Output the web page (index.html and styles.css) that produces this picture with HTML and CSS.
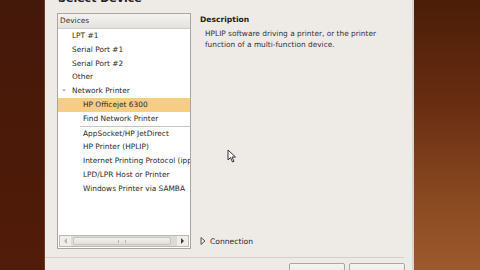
FILE: index.html
```html
<!doctype html>
<html lang="en">
  <head>
    <meta charset="UTF-8" />
    <title>Select Device</title>
    <link rel="stylesheet" href="styles.css">
  </head>
  <body>
    <div class="desk-left"></div>
    <main class="dialog">
      <h1 class="dialog-title">Select Device</h1>
      <div class="dialog-body">
        <section class="tree">
          <div class="tree-header">Devices</div>
          <ul class="tree-list">
            <li class="tree-row">LPT #1</li>
            <li class="tree-row">Serial Port #1</li>
            <li class="tree-row">Serial Port #2</li>
            <li class="tree-row">Other</li>
            <li class="tree-row tree-parent"><span class="expander">&#8964;</span>Network Printer</li>
            <li class="tree-row child selected">HP Officejet 6300</li>
            <li class="tree-row child">Find Network Printer</li>
            <li class="tree-sep"></li>
            <li class="tree-row child">AppSocket/HP JetDirect</li>
            <li class="tree-row child">HP Printer (HPLIP)</li>
            <li class="tree-row child">Internet Printing Protocol (ipp)</li>
            <li class="tree-row child">LPD/LPR Host or Printer</li>
            <li class="tree-row child">Windows Printer via SAMBA</li>
          </ul>
          <div class="hscroll">
            <span class="scroll-btn">
              <svg width="5" height="6" viewBox="0 0 5 6"><path d="M4 0L1 3L4 6Z" fill="#b8b5b0"/></svg>
            </span>
            <span class="scroll-trough"><span class="scroll-thumb"><span class="grip"></span></span></span>
            <span class="scroll-btn">
              <svg width="5" height="6" viewBox="0 0 5 6"><path d="M1 0L4 3L1 6Z" fill="#3c3c3c"/></svg>
            </span>
          </div>
        </section>
        <section class="info">
          <h2 class="info-title">Description</h2>
          <p class="info-text">HPLIP software driving a printer, or the printer function of a multi-function device.</p>
          <div class="info-spacer"></div>
          <div class="connection">
            <svg width="6" height="8" viewBox="0 0 6 8"><path d="M1 0.5L5 4L1 7.5Z" fill="none" stroke="#555" stroke-width="1"/></svg>
            <span>Connection</span>
          </div>
        </section>
      </div>
      <div class="dialog-sep"></div>
      <div class="dialog-buttons">
        <button class="btn">Cancel</button>
        <button class="btn">Forward</button>
      </div>
      <svg class="cursor" width="10" height="14" viewBox="0 0 10 14">
        <path d="M1 1L1 11L3.5 8.5L5.5 13L7 12.3L5 8L8.5 8Z" fill="#fff" stroke="#333" stroke-width="1"/>
      </svg>
    </main>
    <div class="desk-right"></div>
  </body>
</html>
```

FILE: styles.css
```css
* {
  margin: 0;
  padding: 0;
  box-sizing: border-box;
}

html,
body {
  width: 480px;
  height: 270px;
  overflow: hidden;
}

body {
  display: flex;
  font-family: "DejaVu Sans", sans-serif;
  font-size: 7.4px;
  color: #2a2a2a;
  background: #4a1c08;
}

.desk-left {
  width: 45px;
  background: linear-gradient(180deg, #44180a 0%, #4c1a08 60%, #521c0a 100%);
  border-right: 1px solid #6a3a22;
}

.desk-right {
  flex: 1;
  background: linear-gradient(180deg, #4a1d08 0%, #6a2e12 40%, #8a4a22 75%, #9c5a2c 100%);
  border-left: 2px solid #d8d4ce;
}

.dialog {
  position: relative;
  width: 367px;
  background: #eeebe7;
  display: flex;
  flex-direction: column;
  padding: 0 0 0 12px;
}

.dialog-title {
  flex-shrink: 0;
  font-size: 11px;
  font-weight: bold;
  line-height: 12px;
  margin-top: -7px;
  margin-left: 1px;
  color: #222;
}

.dialog-body {
  flex-shrink: 0;
  display: flex;
  gap: 9px;
  margin-top: 8px;
  height: 236px;
}

.tree {
  width: 134px;
  border: 1px solid #a9a6a1;
  background: #fff;
  display: flex;
  flex-direction: column;
}

.tree-header {
  height: 15px;
  line-height: 14px;
  padding-left: 2px;
  background: linear-gradient(180deg, #f4f3f1 0%, #e4e2de 100%);
  border-bottom: 1px solid #cfccc7;
  color: #333;
}

.tree-list {
  list-style: none;
  flex: 1;
  padding-top: 0;
}

.tree-row {
  height: 13.8px;
  line-height: 13.8px;
  padding-left: 14px;
  white-space: nowrap;
  overflow: hidden;
}

.tree-parent {
  padding-left: 3px;
}

.expander {
  display: inline-block;
  width: 11px;
  font-size: 7px;
  color: #666;
  position: relative;
  top: -2px;
}

.child {
  padding-left: 25px;
}

.selected {
  background: #f5cd84;
}

.tree-sep {
  height: 1px;
  margin: 0 0 0 22px;
  background: #c9c6c1;
}

.hscroll {
  display: flex;
  height: 12px;
  margin: 0 1px 1px 1px;
  background: #e3e1dd;
  border: 1px solid #bcb9b4;
}

.scroll-btn {
  width: 11px;
  display: flex;
  align-items: center;
  justify-content: center;
  background: #f0eeeb;
}

.scroll-trough {
  flex: 1;
  padding: 1px 2px;
  background: #dddad6;
}

.scroll-thumb {
  display: flex;
  align-items: center;
  justify-content: center;
  height: 100%;
  width: 96%;
  background: linear-gradient(180deg, #f2f0ed, #e2dfdb);
  border: 1px solid #c7c4bf;
  border-radius: 2px;
}

.grip {
  width: 8px;
  height: 3px;
  border-left: 1px solid #b8b5b0;
  border-right: 1px solid #b8b5b0;
}

.info {
  flex: 1;
  display: flex;
  flex-direction: column;
  padding-top: 2px;
}

.info-title {
  font-size: 7.6px;
  font-weight: bold;
  line-height: 10px;
  color: #222;
}

.info-text {
  margin-top: 3px;
  padding-left: 5px;
  width: 196px;
  line-height: 11px;
  color: #333;
}

.info-spacer {
  flex: 1;
}

.connection {
  display: flex;
  align-items: center;
  gap: 4px;
  height: 12px;
  margin-bottom: 2px;
}

.connection span {
  font-size: 7.6px;
}

.dialog-sep {
  flex-shrink: 0;
  margin-top: 8px;
  margin-right: 8px;
  margin-left: -12px;
  height: 1px;
  background: #d3d0cb;
}

.dialog-buttons {
  flex-shrink: 0;
  display: flex;
  justify-content: flex-end;
  gap: 4px;
  margin-top: 5px;
  margin-right: 7px;
}

.btn {
  width: 56px;
  height: 20px;
  font-family: "DejaVu Sans", sans-serif;
  font-size: 7.4px;
  background: linear-gradient(180deg, #f5f4f2, #e4e1dd);
  border: 1px solid #aaa7a2;
  border-radius: 2px;
  color: #333;
}

.cursor {
  position: absolute;
  left: 182px;
  top: 149px;
}
```
